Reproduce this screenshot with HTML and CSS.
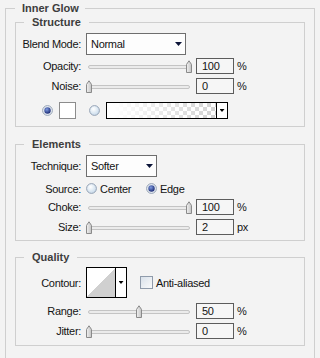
FILE: index.html
```html
<!DOCTYPE html>
<html lang="en">
<head>
<meta charset="UTF-8" />
<meta name="viewport" content="width=device-width, initial-scale=1.0"/>
<title>Inner Glow</title>
<link rel="stylesheet" href="styles.css">
</head>
<body>
<svg class="defs" width="0" height="0">
  <defs>
    <linearGradient id="tg" x1="0" y1="0" x2="1" y2="0">
      <stop offset="0" stop-color="#f2f2f2"/><stop offset="1" stop-color="#c2c2c2"/>
    </linearGradient>
    <radialGradient id="ro" cx="0.4" cy="0.35" r="0.7">
      <stop offset="0" stop-color="#ffffff"/><stop offset="1" stop-color="#c4d8ea"/>
    </radialGradient>
    <radialGradient id="ri" cx="0.4" cy="0.35" r="0.7">
      <stop offset="0" stop-color="#7f9be0"/><stop offset="1" stop-color="#15246e"/>
    </radialGradient>
    <symbol id="thumb" viewBox="0 0 6 13">
      <path d="M.5 12.5V4.4L3 .8l2.5 3.6v8.1z" fill="url(#tg)" stroke="#8a8a8a"/>
    </symbol>
    <symbol id="radio-off" viewBox="0 0 11 11">
      <circle cx="5.5" cy="5.5" r="4.9" fill="url(#ro)" stroke="#95a2b4"/>
    </symbol>
    <symbol id="radio-on" viewBox="0 0 11 11">
      <circle cx="5.5" cy="5.5" r="4.9" fill="#e9eef4" stroke="#95a2b4"/>
      <circle cx="5.5" cy="5.5" r="3.2" fill="url(#ri)"/>
    </symbol>
  </defs>
</svg>

<fieldset class="panel">
  <legend>Inner Glow</legend>

  <fieldset class="group structure">
    <legend>Structure</legend>
    <div class="row tall first">
      <label>Blend Mode:</label>
      <div class="select blend"><span>Normal</span><i class="arrow"></i></div>
    </div>
    <div class="row gap3">
      <label>Opacity:</label>
      <div class="slider" style="--v:100"><div class="track"></div><svg class="thumb"><use href="#thumb"/></svg></div>
      <div class="field">100</div>
      <span class="unit">%</span>
    </div>
    <div class="row">
      <label>Noise:</label>
      <div class="slider" style="--v:0"><div class="track"></div><svg class="thumb"><use href="#thumb"/></svg></div>
      <div class="field">0</div>
      <span class="unit">%</span>
    </div>
    <div class="row colors">
      <svg class="radio"><use href="#radio-on"/></svg>
      <div class="swatch"></div>
      <svg class="radio second"><use href="#radio-off"/></svg>
      <div class="picker">
        <div class="gradient"></div>
        <div class="drop"><i class="arrow small"></i></div>
      </div>
    </div>
  </fieldset>

  <fieldset class="group elements">
    <legend>Elements</legend>
    <div class="row tall first">
      <label>Technique:</label>
      <div class="select technique"><span>Softer</span><i class="arrow"></i></div>
    </div>
    <div class="row source">
      <label>Source:</label>
      <span class="opt"><svg class="radio"><use href="#radio-off"/></svg>Center</span>
      <span class="opt"><svg class="radio"><use href="#radio-on"/></svg>Edge</span>
    </div>
    <div class="row">
      <label>Choke:</label>
      <div class="slider" style="--v:100"><div class="track"></div><svg class="thumb"><use href="#thumb"/></svg></div>
      <div class="field">100</div>
      <span class="unit">%</span>
    </div>
    <div class="row">
      <label>Size:</label>
      <div class="slider" style="--v:0"><div class="track"></div><svg class="thumb"><use href="#thumb"/></svg></div>
      <div class="field">2</div>
      <span class="unit">px</span>
    </div>
  </fieldset>

  <fieldset class="group quality">
    <legend>Quality</legend>
    <div class="row contour-row first">
      <label>Contour:</label>
      <div class="contour">
        <div class="curve"></div>
        <div class="drop"><i class="arrow small"></i></div>
      </div>
      <span class="check"></span>
      <span class="check-label">Anti-aliased</span>
    </div>
    <div class="row gap5">
      <label>Range:</label>
      <div class="slider" style="--v:50"><div class="track"></div><svg class="thumb"><use href="#thumb"/></svg></div>
      <div class="field">50</div>
      <span class="unit">%</span>
    </div>
    <div class="row">
      <label>Jitter:</label>
      <div class="slider" style="--v:0"><div class="track"></div><svg class="thumb"><use href="#thumb"/></svg></div>
      <div class="field">0</div>
      <span class="unit">%</span>
    </div>
  </fieldset>
</fieldset>
</body>
</html>
```

FILE: styles.css
```css
html,body {margin:0;padding:0;background:#f3f3f3;overflow:hidden;}
body {font-family:"Liberation Sans",Arial,sans-serif;font-size:11px;color:#141414;letter-spacing:-0.3px;padding:2px 0 0 5px;}
.defs {position:absolute;width:0;height:0;overflow:hidden;}

fieldset {margin:0;min-width:0;border:1px solid #cfcfcf;}
legend {font-weight:bold;line-height:13px;color:#3d3d3d;letter-spacing:0;}
.panel {width:310px;box-sizing:border-box;padding:1px 9px 40px;}
.panel>legend {padding:0 6px 0 7px;}
.group {padding:4px 0 7px;}
.group>legend {margin-left:8px;padding:0 8px;}
.group.elements {margin-top:11px;padding-bottom:5px;}
.group.quality {margin-top:10px;padding-top:3px;padding-bottom:6px;}

/* rows */
.row {display:flex;align-items:center;height:16px;margin-top:4px;}
.row.first {margin-top:0;}
.row.gap3 {margin-top:3px;}
.row.gap5 {margin-top:5px;}
.row.tall {height:22px;}
.row>label {width:65px;margin-right:5px;text-align:right;flex:none;}

/* dropdowns */
.select {height:22px;box-sizing:border-box;border:1px solid #6e6e6e;background:#fdfdfd;display:flex;align-items:center;justify-content:space-between;padding:0 3px 0 4px;}
.select.blend {width:100px;}
.select.technique {width:71px;}
.arrow {display:block;width:7px;height:4px;background:#0c1538;clip-path:polygon(0 0,100% 0,50% 100%);}
.arrow.small {width:5px;height:3px;background:#000;}

/* sliders */
.slider {position:relative;width:106px;height:13px;flex:none;}
.slider .track {margin:5px 2px 0;height:4px;box-sizing:border-box;border:1px solid #c4c4c4;border-radius:2px;background:#ebebeb;}
.slider .thumb {position:absolute;top:0;left:calc(var(--v) * 1px);width:6px;height:13px;}
.field {width:38px;height:16px;box-sizing:border-box;border:1px solid #5c5c5c;background:#f6f6f6;margin-left:4px;padding-left:5px;line-height:14px;}
.unit {margin-left:3px;}

/* colour row */
.row.colors {height:17px;margin-top:8px;padding-left:26px;}
.radio {width:11px;height:11px;flex:none;}
.swatch {width:17px;height:17px;box-sizing:border-box;border:1px solid #8c8c8c;background:#fff;margin-left:6px;}
.radio.second {margin-left:13px;}
.picker {width:122px;height:17px;box-sizing:border-box;border:1px solid #000;margin-left:6px;display:flex;}
.gradient {flex:1;background:linear-gradient(to right,#fff 5%,rgba(255,255,255,0) 100%),conic-gradient(#d2d2d2 25%,#fff 0 50%,#d2d2d2 0 75%,#fff 0) 0 0/8px 8px;}
.drop {width:10px;border-left:1px solid #000;background:#fff;display:flex;align-items:center;justify-content:center;}

/* source */
.row.source {height:13px;margin-top:5px;}
.opt {display:flex;align-items:center;width:60px;}
.opt .radio {margin-right:3px;}

/* quality */
.row.contour-row {height:31px;}
.contour {width:41px;height:31px;box-sizing:border-box;border:1px solid #000;display:flex;flex:none;}
.curve {flex:1;background:linear-gradient(to top left,#d0d0d0 50%,#fff 50%);}
.check {width:13px;height:13px;box-sizing:border-box;border:1px solid #8f9bab;background:linear-gradient(135deg,#d9e1ea,#f9fafb);margin-left:13px;flex:none;}
.check-label {margin-left:3px;}
```
